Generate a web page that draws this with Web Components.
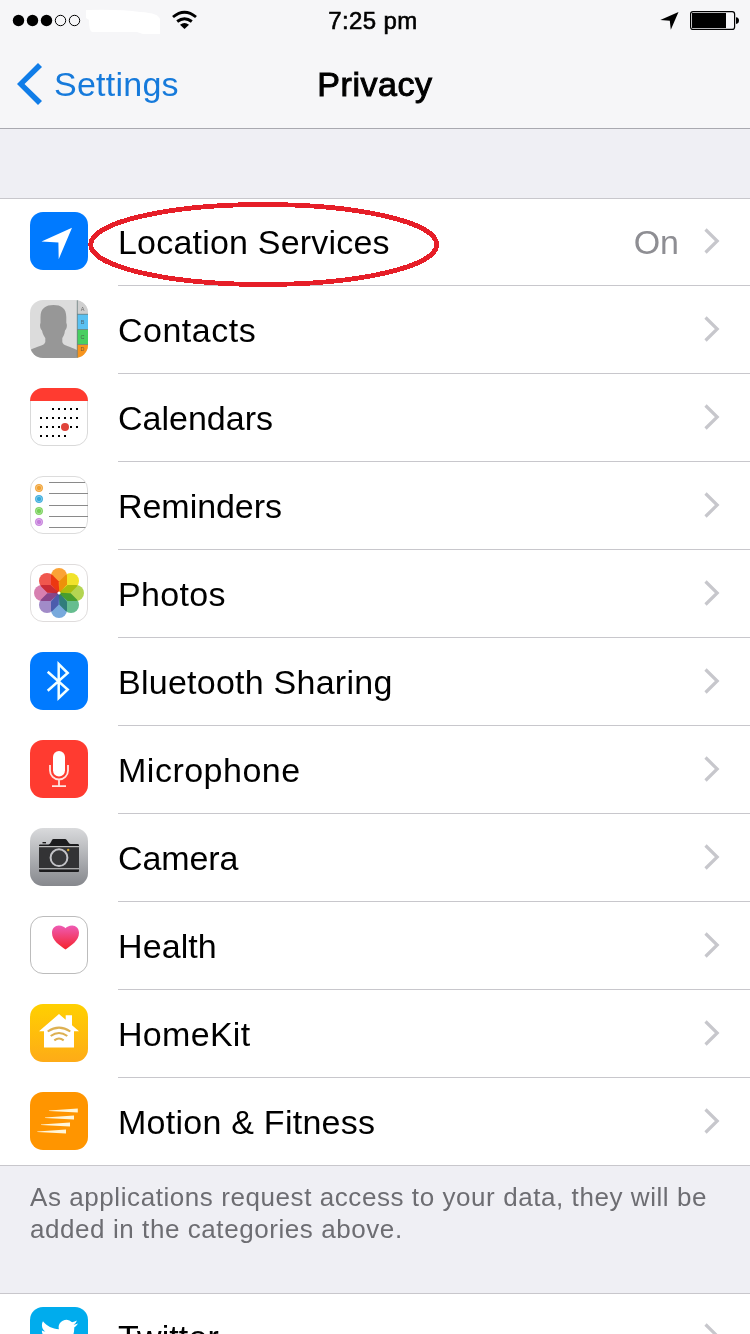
<!DOCTYPE html>
<html lang="en">
<head>
<meta charset="utf-8">
<title>Privacy</title>
<style>
html,body{margin:0;height:1334px;overflow:hidden;background:#efeff4;font-family:"Liberation Sans",Arial,sans-serif;color:#000}
</style>
</head>
<body>
<settings-screen></settings-screen>
<script>
const ICONS = {
location:`<rect width="58" height="58" rx="13" fill="#007aff"/><path d="M42 15.8 11.5 29.6 28.4 30.6 28.7 47.2Z" fill="#fff"/>`,
contacts:`<defs><clipPath id="c"><rect width="58" height="58" rx="13"/></clipPath></defs><g clip-path="url(#c)"><path d="M0 0H58V58H0Z" fill="#dcdcdc"/><path d="M10.5 17C10.5 8 16 5 23.5 5S36.3 8 36.3 17V23C37.5 25 36.8 29 35 30.5C34.5 35 33 37 32.3 38V42C33 46 40 46 47 50V58H0V50C7 46 14.500 46 15.300 42V38C14 36 12.500 34 12 30.500C10.200 29 9.500 25 10.500 23Z" fill="#979797"/><path d="M47 0H58V14H47Z" fill="#cfcfcf"/><path d="M47 14H58V29.500H47Z" fill="#5ac1f2"/><path d="M47 29.500H58V44.500H47Z" fill="#48cf60"/><path d="M47 44.500H58V58H47Z" fill="#f7941d"/><path d="M47.300 0V58M47 14.300H58M47 29.500H58M47 44.500H58" stroke="#6d7f80" stroke-width="1" fill="none" opacity=".8"/><g font-size="5.500" font-family="Liberation Sans,sans-serif" fill="#444" fill-opacity=".75" text-anchor="middle"><text x="52.500" y="11">A</text><text x="52.500" y="24">B</text><text x="52.500" y="39">C</text><text x="52.500" y="51">D</text></g></g>`,
calendars:`<defs><clipPath id="c"><rect width="58" height="58" rx="13"/></clipPath></defs><rect x=".5" y=".5" width="57" height="57" rx="12.500" fill="#fff" stroke="#d9d9d9"/><path clip-path="url(#c)" d="M0 0H58V13H0Z" fill="#ff3b30"/><path d="M22 21H50M10 30H50M10 39H50M10 48H38" stroke="#000" stroke-width="2" stroke-dasharray="2 4"/><circle cx="35" cy="39" r="4" fill="#e0433a"/>`,
reminders:`<rect x=".5" y=".5" width="57" height="57" rx="12.500" fill="#fff" stroke="#dcdcdc"/><path d="M19 6.500H55M19 17.500H58M19 29.500H58M19 40.500H58M19 51.500H55.500" stroke="#8a8a8a"/>${[['#f0a030',12],['#35aadc',23],['#76d057',35],['#c57ddb',46]].map(([c,y])=>`<circle cx="9" cy="${y}" r="3.700" fill="${c}" stroke="${c}" stroke-opacity=".6"/><circle cx="9" cy="${y}" r="2.700" fill="none" stroke="#fff" stroke-opacity=".6" stroke-width=".6"/>`).join('')}`,
photos:`<rect x=".5" y=".5" width="57" height="57" rx="12.500" fill="#fff" stroke="#dfdcdc"/><g style="isolation:isolate">${['#fba336','#f1e32b','#b4d552','#66bd8f','#78a9dc','#a18bc8','#d77fb0','#f0574e'].map((c,i)=>`<path style="mix-blend-mode:multiply" transform="rotate(${i*45} 29 29)" d="M21 12a8 8 0 0 1 16 0V20.500L29.800 28.500H28.200L21 20.500Z" fill="${c}"/>`).join('')}</g><circle cx="29" cy="29" r="1.600" fill="#fff"/>`,
bluetooth:`<rect width="58" height="58" rx="13" fill="#007aff"/><path d="M17.700 19.700 37.700 37.500 28.700 46V12L37.700 21 17.700 38.700" fill="none" stroke="#f2ffff" stroke-width="2.500"/>`,
microphone:`<rect width="58" height="58" rx="13" fill="#ff3b30"/><rect x="23" y="11" width="12" height="25.500" rx="6" fill="#fff"/><path d="M20 25V30.500a9 9 0 0 0 18 0V25M29 39.500V46M22 46.200H36" fill="none" stroke="#ffe4e0" stroke-width="1.800"/>`,
camera:`<defs><linearGradient id="g" x2="0" y2="1"><stop stop-color="#d9dadc"/><stop offset="1" stop-color="#86888d"/></linearGradient></defs><rect width="58" height="58" rx="13" fill="url(#g)"/><path d="M9 17.500Q9 16.500 10 16.500H18.500Q20 16 21 14L22 12Q22.500 11 23.500 11H35Q36 11 36.700 12L38.500 14.500Q39.500 16 41 16H48Q49 16 49 17.500V43Q49 44 48 44H10Q9 44 9 43Z" fill="#1c1c1e"/><path d="M9 19.200H49V40.200H9Z" fill="#333335"/><path d="M12.500 14.700H16" stroke="#111" stroke-width="1.300"/><path d="M9 18.700H49M9 40.800H49" stroke="#e4e4e4" stroke-width="1"/><circle cx="29" cy="29.700" r="8.400" fill="#38383a" stroke="#c4c4c8" stroke-width="2"/><circle cx="38.200" cy="22" r="1.200" fill="#d6a62a"/>`,
health:`<defs><linearGradient id="g" x2="0" y2="1"><stop stop-color="#ee5bb4"/><stop offset="1" stop-color="#f5222b"/></linearGradient></defs><rect x=".5" y=".5" width="57" height="57" rx="12.500" fill="#fff" stroke="#bcbcbc"/><path d="M35.500 33.600C30 29.500 22 25 22 16.800C22 12.500 25 9.500 28.800 9.500C32 9.500 34.500 11 35.500 12.300C36.500 11 39 9.500 42.200 9.500C46 9.500 49 12.500 49 16.800C49 25 41 29.500 35.500 33.600Z" fill="url(#g)"/>`,
homekit:`<defs><linearGradient id="g" x2="0" y2="1"><stop stop-color="#ffd000"/><stop offset="1" stop-color="#feab17"/></linearGradient></defs><rect width="58" height="58" rx="13" fill="url(#g)"/><path d="M29 10 35.700 15.800V11.300H42V21.300L49 27.300H44V43.500H14V27.300H9Z" fill="#fff"/><g fill="none" stroke="#ddb052" stroke-width="2.100"><path d="M17.700 27.500Q29 19.700 40.300 27.500M20.700 32Q29 26 37.300 32M24.300 36.300Q29 32.700 33.700 36.300"/></g>`,
motion:`<rect width="58" height="58" rx="13" fill="#ff9500"/><path d="M19 18.500 47.800 16.600V20.400L19 19ZM15 25.500 44 23.600V27.400L15 26ZM11 32.500 40 30.600V34.400L11 33ZM7.300 39.500 36 37.600V41.400L7.300 40Z" fill="#fff5d8"/>`,
twitter:`<rect width="58" height="58" rx="13" fill="#00aced"/><path transform="translate(10.400 9.300) scale(1.570)" fill="#fff" d="M23.953 4.570a10 10 0 01-2.825.775 4.958 4.958 0 002.163-2.723c-.951.555-2.005.959-3.127 1.184a4.920 4.920 0 00-8.384 4.482C7.690 8.095 4.067 6.130 1.640 3.162a4.822 4.822 0 00-.666 2.475c0 1.710.870 3.213 2.188 4.096a4.904 4.904 0 01-2.228-.616v.060a4.923 4.923 0 003.946 4.827 4.996 4.996 0 01-2.212.085 4.936 4.936 0 004.604 3.417 9.867 9.867 0 01-6.102 2.105c-.390 0-.779-.023-1.170-.067a13.995 13.995 0 007.557 2.209c9.053 0 13.998-7.496 13.998-13.985 0-.210 0-.420-.015-.630A9.935 9.935 0 0024 4.590z"/>`
};

const define = (name, render) => customElements.define(name, class extends HTMLElement {
  constructor(){ super(); this.attachShadow({mode:'open'}); }
  connectedCallback(){ this.shadowRoot.innerHTML = render(this); }
});

define('app-icon', el => `<style>:host{display:block;width:58px;height:58px;flex:none}svg{display:block}</style>
<svg width="58" height="58" viewBox="0 0 58 58">${ICONS[el.getAttribute('name')]}</svg>`);

define('status-bar', () => `<style>
:host{display:grid;grid-template-columns:1fr auto 1fr;height:40px}
svg{display:block}.r{justify-self:end}
.t{font-size:24px;line-height:41px;letter-spacing:.4px;-webkit-text-stroke:.6px #000;white-space:pre;padding-right:4px}
</style>
<svg width="200" height="40" viewBox="0 0 200 40"><circle cx="18.500" cy="20.500" r="5.700"/><circle cx="32.500" cy="20.500" r="5.700"/><circle cx="46.500" cy="20.500" r="5.700"/><g fill="none" stroke="#000"><circle cx="60.500" cy="20.500" r="5.200"/><circle cx="74.500" cy="20.500" r="5.200"/></g>
<path d="M86 10Q120 9 140 12Q160 13 160 20V34H143L137 32H92Q89 31 89 20L86 18Z" fill="#fff"/>
<g fill="none" stroke="#000" stroke-width="2.900"><path d="M173 17Q184.500 7.500 196 17"/><path d="M177.200 21.500Q184.500 15.800 191.800 21.500"/></g><path d="M180 24.700Q184.500 21.500 189 24.700L184.500 29Z"/></svg>
<div class="t">7:25 pm</div>
<svg class="r" width="100" height="40" viewBox="650 0 100 40"><path d="M678.500 12 660.300 20 669.800 20.700 670.800 29.800Z"/><rect x="690.600" y="11.600" width="44" height="17.800" rx="2.500" fill="none" stroke="#000" stroke-width="1.200"/><path d="M692 13H726V28H692ZM736 17.200Q739 17.500 739 20.500T736 24Z"/></svg>`);

define('nav-bar', () => `<style>
:host{display:grid;grid-template-columns:1fr auto 1fr;height:88px;border-bottom:1px solid #a9a9b0;font-size:34px;line-height:88px}
.b{display:flex;padding-left:16px;color:#167adb;letter-spacing:.25px}
svg{display:block;margin:22px 11px 0 0}
h1{margin:0;font:inherit;letter-spacing:.55px;-webkit-text-stroke:1px #000}
</style><div class="b"><svg width="27" height="44" viewBox="16 62 27 44"><path d="M38 63 42 67 24.500 84 42 101 38 105 17 84Z" fill="#107de8"/></svg><span>Settings</span></div><h1>Privacy</h1><span></span>`);

define('list-row', el => `<style>
:host{display:flex;position:relative;height:88px;padding-left:30px;box-sizing:border-box}
app-icon{margin:14px 30px 0 0}
.c{flex:1;display:flex;border-bottom:1px solid #c8c7cc;font-size:34px;line-height:88px;height:87px;letter-spacing:${el.getAttribute('track')||.2}px;white-space:nowrap}
.c span{flex:1}.v{color:#8e8e93;padding-right:25px;letter-spacing:0}
.c svg{display:block;margin:30px 30px 0 0}
.ring{position:absolute;left:86px;top:1px;pointer-events:none}
:host([last]) .c{border-color:transparent}
</style><app-icon name="${el.getAttribute('icon')}"></app-icon>
<div class="c"><span><slot></slot></span>${el.hasAttribute('value')?`<div class="v">${el.getAttribute('value')}</div>`:''}<svg width="16" height="26" viewBox="0 0 16 26"><path d="M1.500 1.500 13.200 13 1.500 24.500" fill="none" stroke="#c7c7cc" stroke-width="3.200"/></svg></div>
${el.hasAttribute('circled')?`<svg class="ring" width="356" height="92"><ellipse cx="177.700" cy="45.500" rx="173" ry="40" fill="none" stroke="#e61e28" stroke-width="4.800" shape-rendering="crispEdges"/></svg>`:''}`);

define('list-group', () => `<style>
:host{display:block;background:linear-gradient(#c8c7cc,#c8c7cc) top/100% 1px no-repeat,linear-gradient(#c8c7cc,#c8c7cc) bottom/100% 1px no-repeat #fff}
</style><slot></slot>`);

define('group-note', () => `<style>
:host{display:block;box-sizing:border-box;height:127px;padding:15px 30px 0;font-size:26px;line-height:32px;color:#6d6d72;letter-spacing:.57px;white-space:nowrap}
</style><slot></slot>`);

define('settings-screen', () => `<style>
:host{display:flex;flex-direction:column;width:750px;height:1334px;overflow:hidden}
header{background:#f6f6f8;height:129px;flex:none;margin-bottom:69px}
list-group,group-note{flex:none}
</style>
<header><status-bar></status-bar><nav-bar></nav-bar></header>
<list-group>
<list-row icon="location" value="On" circled>Location Services</list-row>
<list-row icon="contacts" track=".5">Contacts</list-row>
<list-row icon="calendars" track="0">Calendars</list-row>
<list-row icon="reminders" track="-.05">Reminders</list-row>
<list-row icon="photos" track=".35">Photos</list-row>
<list-row icon="bluetooth" track=".25">Bluetooth Sharing</list-row>
<list-row icon="microphone" track=".5">Microphone</list-row>
<list-row icon="camera" track="-.1">Camera</list-row>
<list-row icon="health" track=".1">Health</list-row>
<list-row icon="homekit" track=".3">HomeKit</list-row>
<list-row icon="motion" track=".25" last>Motion &amp; Fitness</list-row>
</list-group>
<group-note>As applications request access to your data, they will be<br>added in the categories above.</group-note>
<list-group><list-row icon="twitter" track=".1">Twitter</list-row></list-group>`);
</script>
</body>
</html>
